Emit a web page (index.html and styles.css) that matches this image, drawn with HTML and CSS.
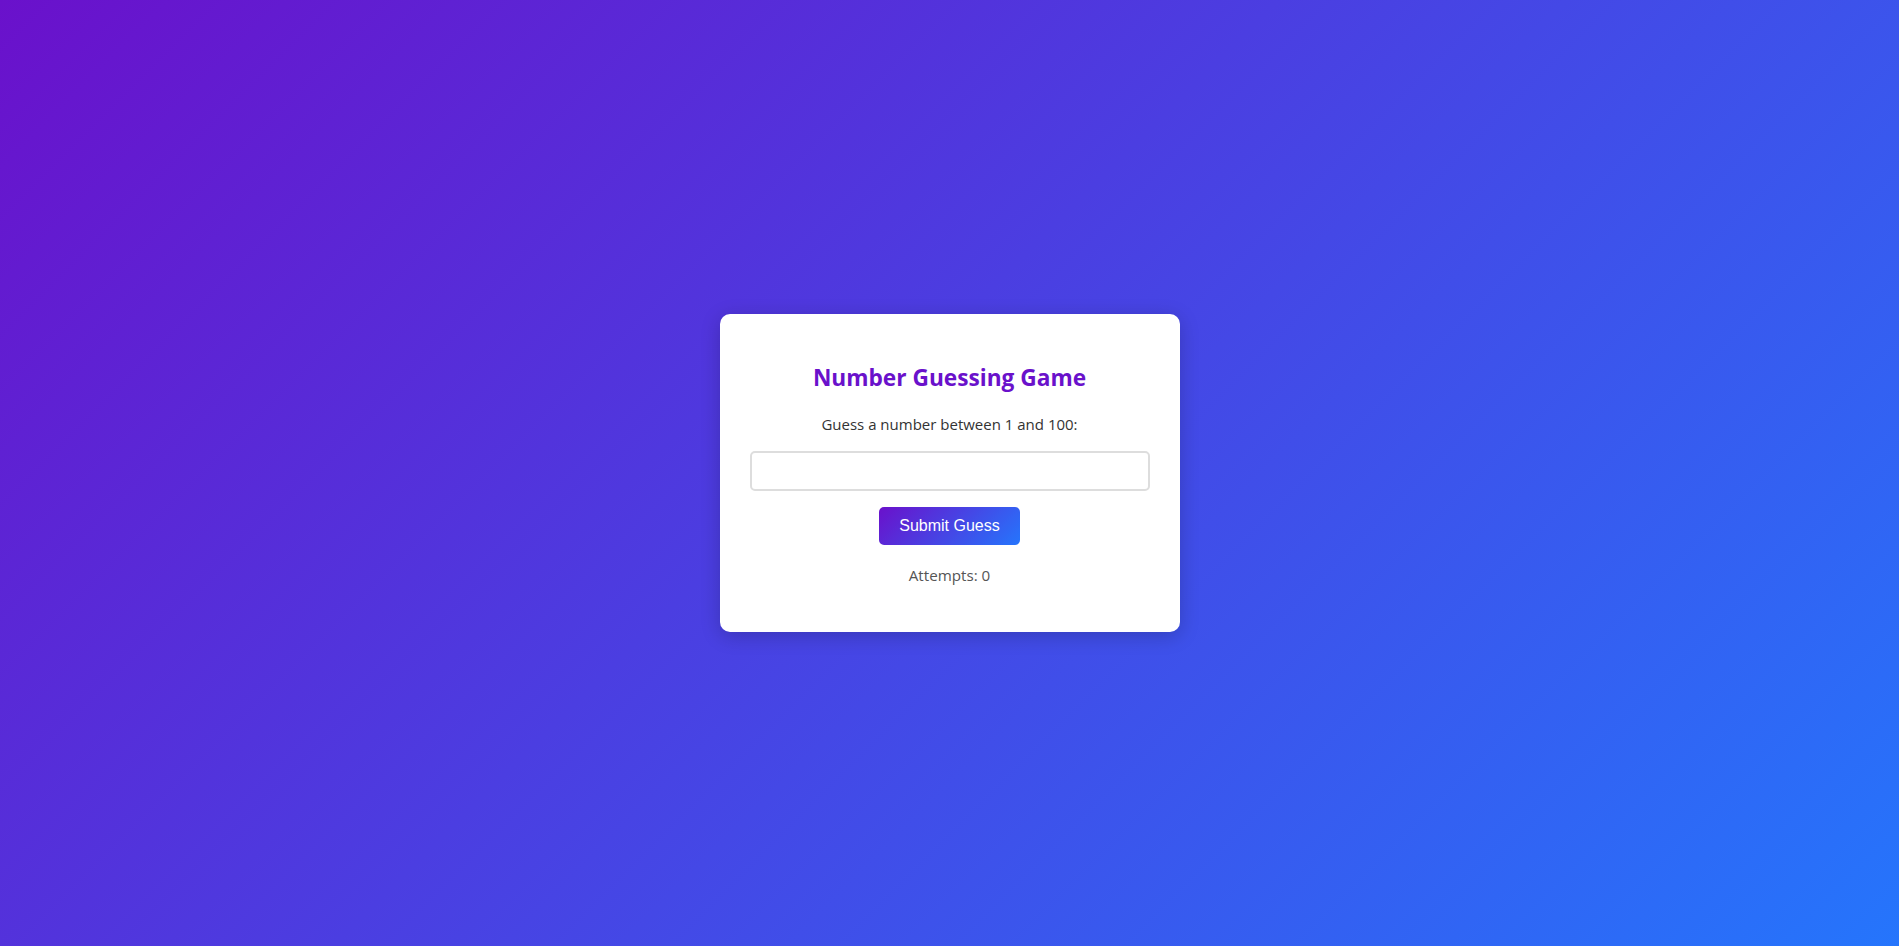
FILE: index.html
```html
<!DOCTYPE html>
<html lang="en">
<head>
<meta charset="UTF-8">
<title>Number Guessing Game</title>
<link rel="stylesheet" href="styles.css">
</head>
<body>
<main class="page">
  <section class="card">
    <h2 class="title">Number Guessing Game</h2>
    <p class="prompt">Guess a number between 1 and 100:</p>
    <input class="guess-input" type="number" aria-label="Your guess">
    <button class="submit-btn" type="button">Submit Guess</button>
    <p class="attempts">Attempts: 0</p>
  </section>
</main>
</body>
</html>
```

FILE: styles.css
```css
* {
  box-sizing: border-box;
}

html, body {
  margin: 0;
  height: 100%;
}

body {
  font-family: "Segoe UI", "Open Sans", "Noto Sans", sans-serif;
  background: linear-gradient(135deg, #6a11cb 0%, #2575fc 100%);
}

.page {
  min-height: 100vh;
  display: flex;
  align-items: center;
  justify-content: center;
}

.card {
  width: 460px;
  background: #fff;
  border-radius: 10px;
  padding: 30px;
  text-align: center;
  box-shadow: 0 4px 20px rgba(0, 0, 0, 0.2);
}

.title {
  margin: 18px 0 20px;
  font-size: 22.7px;
  line-height: 32px;
  font-weight: 700;
  color: #6a11cb;
}

.prompt {
  margin: 0 0 16px;
  font-size: 15px;
  line-height: 21px;
  color: #333;
}

.guess-input {
  display: block;
  width: 100%;
  height: 40px;
  margin: 0 0 16px;
  padding: 8px 10px;
  font-size: 16px;
  border: 2px solid #ddd;
  border-radius: 5px;
  outline: none;
}

.submit-btn {
  height: 38px;
  padding: 0 20px;
  font-family: "Liberation Sans", Arial, sans-serif;
  font-size: 16px;
  color: #fff;
  border: none;
  border-radius: 5px;
  background: linear-gradient(135deg, #6a11cb 0%, #2575fc 100%);
  cursor: pointer;
}

.attempts {
  margin: 20px 0 16px;
  font-size: 15.2px;
  line-height: 21px;
  color: #555;
}
```
